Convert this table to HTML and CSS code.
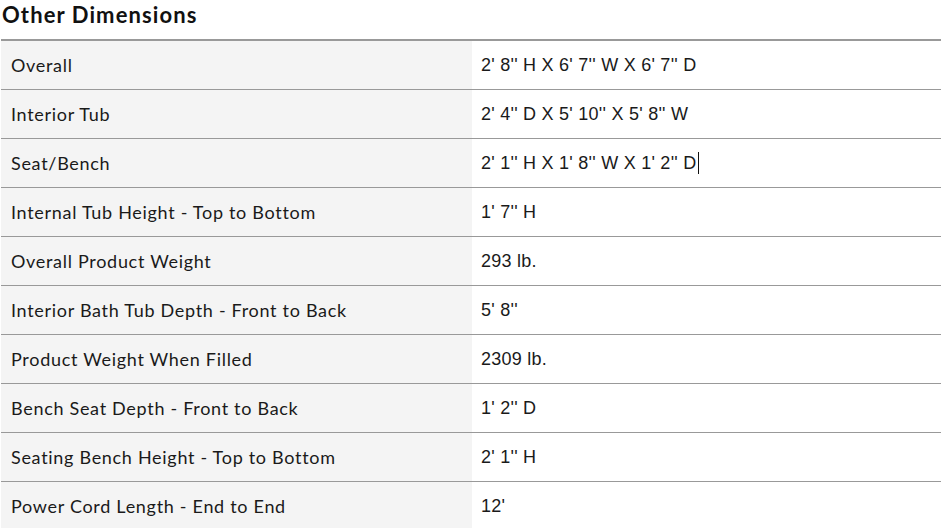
FILE: index.html
```html
<!DOCTYPE html>
<html>
<head>
<meta charset="utf-8">
<link rel="stylesheet" href="styles.css">
</head>
<body>
<div class="wrap">
  <h2 class="title">Other Dimensions</h2>
  <table class="dims">
    <tr><td class="k">Overall</td><td class="v">2' 8'' H X 6' 7'' W X 6' 7'' D</td></tr>
    <tr><td class="k">Interior Tub</td><td class="v">2' 4'' D X 5' 10'' X 5' 8'' W</td></tr>
    <tr><td class="k">Seat/Bench</td><td class="v">2' 1'' H X 1' 8'' W X 1' 2'' D<span class="caret"></span></td></tr>
    <tr><td class="k">Internal Tub Height - Top to Bottom</td><td class="v">1' 7'' H</td></tr>
    <tr><td class="k">Overall Product Weight</td><td class="v">293 lb.</td></tr>
    <tr><td class="k">Interior Bath Tub Depth - Front to Back</td><td class="v">5' 8''</td></tr>
    <tr><td class="k">Product Weight When Filled</td><td class="v">2309 lb.</td></tr>
    <tr><td class="k">Bench Seat Depth - Front to Back</td><td class="v">1' 2'' D</td></tr>
    <tr><td class="k">Seating Bench Height - Top to Bottom</td><td class="v">2' 1'' H</td></tr>
    <tr><td class="k">Power Cord Length - End to End</td><td class="v">12'</td></tr>
  </table>
</div>
</body>
</html>
```
FILE: styles.css
```css
html, body { margin: 0; padding: 0; background: #fff; }
.wrap { padding-left: 1px; width: 941px; }
.title {
  margin: 0;
  height: 39px;
  font-family: Lato, "Noto Sans", sans-serif;
  font-weight: 700;
  font-size: 22px;
  letter-spacing: 1.1px;
  line-height: 30px;
  color: #111;
  padding-left: 1px;
}
.dims {
  width: 940px;
  border-collapse: collapse;
  border-top: 2px solid #999;
}
.dims td {
  height: 48px;
  padding: 0;
  border-bottom: 1px solid #999;
  color: #1a1a1a;
  vertical-align: middle;
}
.dims .k {
  width: 461px;
  background: #f4f4f4;
  padding-left: 10px;
  font-family: Lato, "Noto Sans", sans-serif;
  font-size: 18px;
  letter-spacing: 0.7px;
}
.dims .v {
  padding-left: 9px;
  font-family: "Liberation Sans", Arial, sans-serif;
  font-size: 18px;
  letter-spacing: 0.25px;
}
.caret {
  display: inline-block;
  width: 1px;
  height: 22px;
  background: #111;
  margin-left: 1px;
  vertical-align: -5px;
}
```
